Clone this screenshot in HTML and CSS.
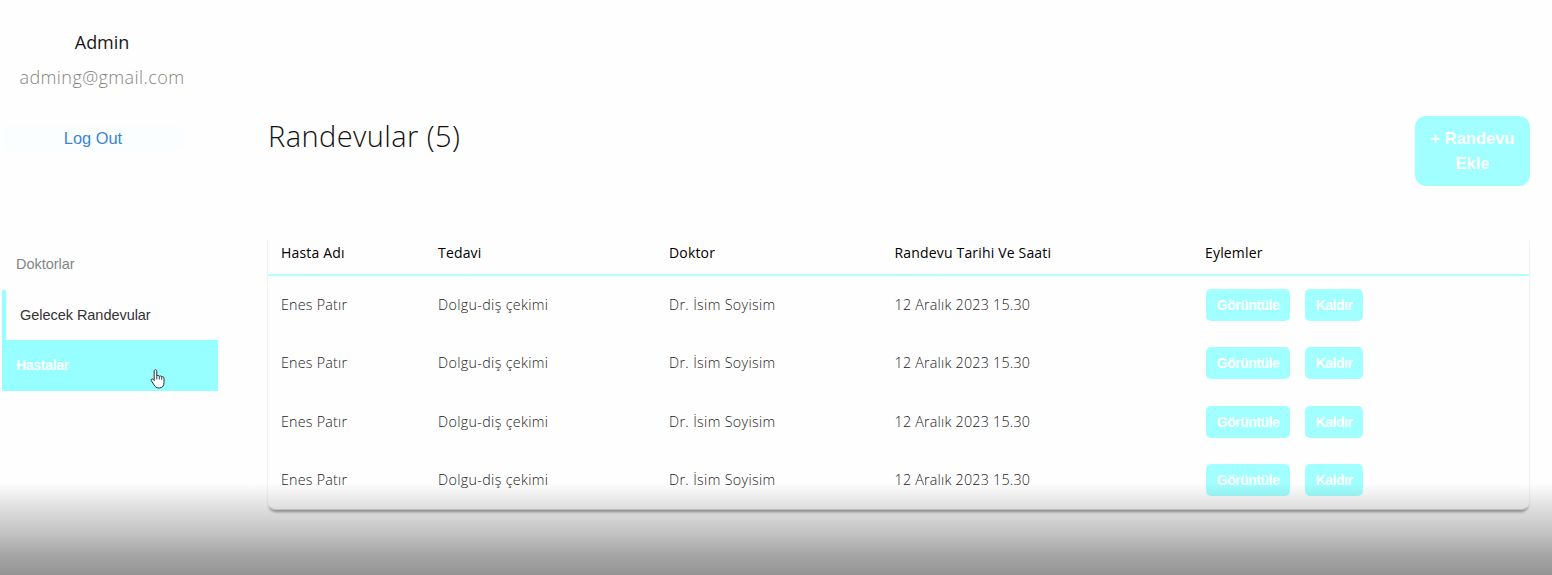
FILE: index.html
```html
<!DOCTYPE html>
<html lang="tr">
<head>
<meta charset="utf-8">
<title>Randevular</title>
<link rel="stylesheet" href="styles.css">
</head>
<body>
<div class="app">
  <aside class="sidebar">
    <div class="profile">
      <div class="name">Admin</div>
      <div class="email">adming@gmail.com</div>
      <button class="logout"><span>Log Out</span></button>
    </div>
    <nav class="nav">
      <a class="nav-item"><span>Doktorlar</span></a>
      <a class="nav-item current"><span>Gelecek Randevular</span></a>
      <a class="nav-item hovered"><span>Hastalar</span></a>
    </nav>
  </aside>
  <main class="main">
    <header class="header">
      <h1 class="title"><span>Randevular (5)</span></h1>
      <button class="add">+ Randevu<br>Ekle</button>
    </header>
    <section class="card">
      <div class="row head"><span>Hasta Adı</span><span>Tedavi</span><span>Doktor</span><span>Randevu Tarihi Ve Saati</span><span>Eylemler</span></div>
      <div class="row"><span>Enes Patır</span><span class="wide">Dolgu-diş çekimi</span><span class="wide">Dr. İsim Soyisim</span><span>12 Aralık 2023 15.30</span><div class="actions"><button class="btn view">Görüntüle</button><button class="btn remove">Kaldır</button></div></div>
      <div class="row"><span>Enes Patır</span><span class="wide">Dolgu-diş çekimi</span><span class="wide">Dr. İsim Soyisim</span><span>12 Aralık 2023 15.30</span><div class="actions"><button class="btn view">Görüntüle</button><button class="btn remove">Kaldır</button></div></div>
      <div class="row"><span>Enes Patır</span><span class="wide">Dolgu-diş çekimi</span><span class="wide">Dr. İsim Soyisim</span><span>12 Aralık 2023 15.30</span><div class="actions"><button class="btn view">Görüntüle</button><button class="btn remove">Kaldır</button></div></div>
      <div class="row"><span>Enes Patır</span><span class="wide">Dolgu-diş çekimi</span><span class="wide">Dr. İsim Soyisim</span><span>12 Aralık 2023 15.30</span><div class="actions"><button class="btn view">Görüntüle</button><button class="btn remove">Kaldır</button></div></div>
    </section>
  </main>
</div>
<div class="shade"></div>
<svg class="cursor" viewBox="0 0 16 20" width="16" height="20"><path d="M4.2 11.5V2.2c0-2 2.6-2 2.6 0V7c.3-1 2.2-.9 2.5.5.5-.9 2.1-.7 2.4.6.7-.8 2.3-.4 2.3 1.1v4.3c0 3.2-1.5 5.5-4.8 5.5-3 0-4-1.200-5.300-3.300L1.300 11.700c-.8-1.400.9-2.500 2-1.300z" fill="#fff" stroke="#222d38" stroke-width="1"/><path d="M6.800 7v3.500M9.300 7.500v3M11.700 8.200v2.600" stroke="#222d38" stroke-width=".9" fill="none"/></svg>
</body>
</html>
```
FILE: styles.css
```css
* { box-sizing: border-box; }
body {
  margin: 0;
  height: 575px;
  overflow: hidden;
  background: #fefefe;
  font-family: "Open Sans", "Noto Sans", sans-serif;
}
button { border: 0; padding: 0; font-family: "Liberation Sans", Arial, sans-serif; }
.app { display: flex; height: 575px; }
.sidebar { width: 218px; padding: 29px 0 0 2px; }
.profile { display: flex; flex-direction: column; height: 210px; }
.name, .email { width: 200px; text-align: center; }
.name { font-size: 18px; line-height: 26px; color: #181818; letter-spacing: -.05px; }
.email { margin-top: 9px; font-size: 18px; line-height: 26px; color: #85857f; font-weight: 300; letter-spacing: .42px; white-space: nowrap; }
.logout {
  margin-top: 36px;
  width: 182px;
  height: 25px;
  border-radius: 8px;
  background: #fafeff;
  color: #3a86d0;
  font-size: 16.4px;
  line-height: 25px;
}
.nav { font-family: "Liberation Sans", Arial, sans-serif; font-size: 14.5px; }
.nav-item { display: flex; align-items: center; height: 50px; padding-left: 14px; color: #858585; letter-spacing: -.04px; }
.nav-item.current { margin-top: 1px; border-left: 4px solid #97ffff; color: #333; }
.nav-item.hovered { height: 51px; padding-bottom: 2px; background: #97ffff; color: #fff; font-weight: 700; font-size: 14px; letter-spacing: -.3px; }
.main { width: 1263px; margin-left: 49px; padding-top: 116px; }
.header { display: flex; justify-content: space-between; align-items: flex-start; height: 124px; }
.title { margin: 1px 0 0 1px; font-size: 29px; font-weight: 300; line-height: 38px; letter-spacing: .42px; color: #111; }
.add {
  width: 115px;
  height: 70px;
  border-radius: 11px;
  background: #a1ffff;
  color: #fff;
  font-size: 16.5px;
  font-weight: 700;
  line-height: 25px;
}
.card {
  height: 270px;
  border: 1px solid #f2f2f2;
  border-top: 0;
  border-bottom-color: #ddd;
  border-radius: 0 0 9px 9px;
  box-shadow: 0 4px 3px -2px #999f9f;
}
.row {
  display: grid;
  grid-template-columns: 157px 231px 225.500px 310.500px 1fr;
  align-items: center;
  height: 58.400px;
  padding: 0 0 1.600px 13px;
  font-size: 14.3px;
  font-weight: 300;
  letter-spacing: .22px;
  color: #222;
  white-space: nowrap;
}
.wide { letter-spacing: .34px; }
.row.head { height: 36px; padding-bottom: 9px; border-bottom: 2px solid #b2ffff; font-size: 14px; font-weight: 400; letter-spacing: .17px; color: #000; }
.actions { display: flex; gap: 15px; padding: 1px 0 0 1px; }
.btn { height: 32px; border-radius: 5px; background: #a1ffff; color: #fff; font-size: 14px; font-weight: 700; letter-spacing: -.5px; }
.view { width: 84px; }
.remove { width: 58px; }
.shade {
  position: absolute;
  left: 0;
  bottom: 0;
  width: 100%;
  height: 92px;
  background: linear-gradient(rgba(0,0,0,0), rgba(0,0,0,.13) 28%, rgba(0,0,0,.24) 56%, rgba(0,0,0,.36) 81%, rgba(0,0,0,.42));
}
.cursor { position: absolute; left: 150px; top: 369px; }
```
